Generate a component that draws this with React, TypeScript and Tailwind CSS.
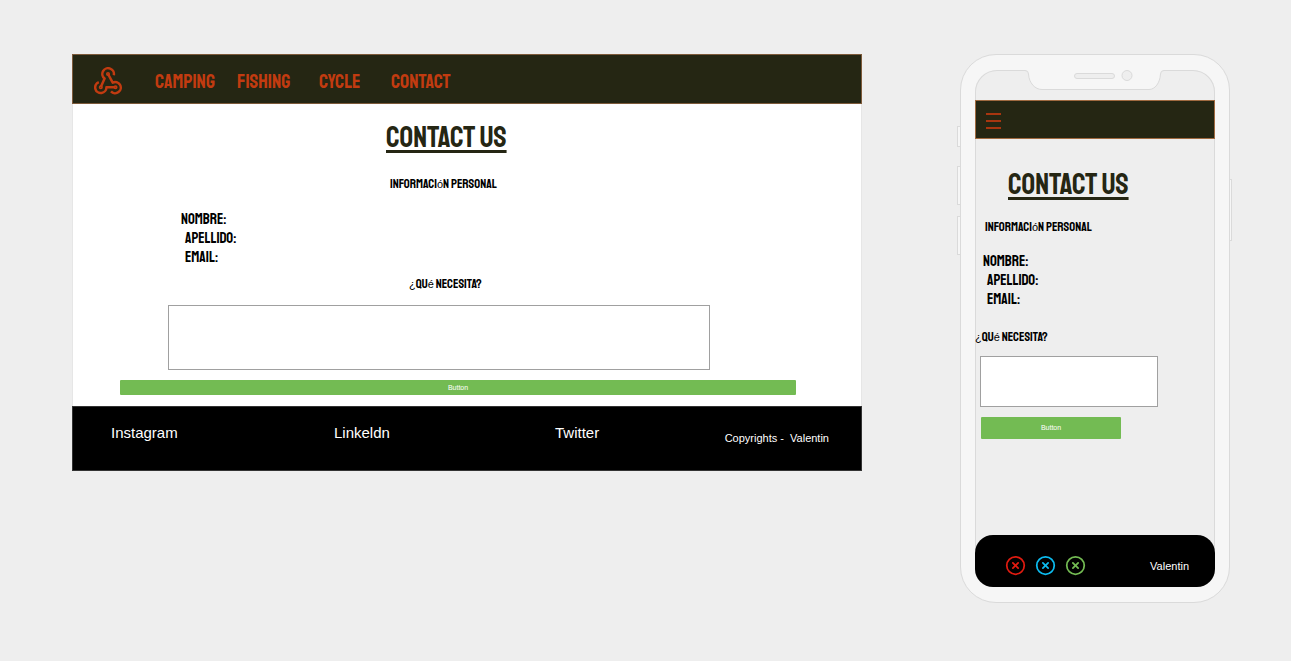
import type { ReactNode } from "react";
import { CircleX } from "lucide-react";

const display = "font-['Staatliches','Bebas_Neue','Liberation_Sans_Narrow','Liberation_Sans',sans-serif] font-normal";

const links = [
  { name: "CAMPING", width: "w-[82px]" },
  { name: "FISHING", width: "w-[82px]" },
  { name: "CYCLE", width: "w-[72px]" },
  { name: "CONTACT", width: "w-[72px]" },
];

const fields = [
  { id: "nombre", label: "NOMBRE:", indent: "" },
  { id: "apellido", label: "APELLIDO:", indent: "pl-1" },
  { id: "email", label: "EMAIL:", indent: "pl-1" },
];

function WebhookLogo() {
  return (
    <svg className="size-7" viewBox="0 0 28 28" fill="none" stroke="currentColor" strokeWidth="2.500" strokeLinecap="butt" strokeLinejoin="round">
      <path d="M19.800 8.200A5.800 5.800 0 1 0 10.600 11.600L6.800 20" />
      <path d="M14 7L18.700 15.600A5.600 5.600 0 1 1 17 24.400" />
      <path d="M4.800 15.200A5.600 5.600 0 1 0 12.400 20.300H21.500" />
      <circle cx="14" cy="7" r="0.800" />
      <circle cx="6.800" cy="20.200" r="0.800" />
      <circle cx="21.500" cy="20.300" r="0.800" />
    </svg>
  );
}

function Accent({ children }: { children: ReactNode }) {
  return <span className="font-['Liberation_Sans',sans-serif] text-[11px]">{children}</span>;
}

function PersonalInfo() {
  return <>INFORMACI<Accent>ó</Accent>N PERSONAL</>;
}

function NeedLabel() {
  return <><Accent>¿</Accent>QU<Accent>é</Accent> NECESITA?</>;
}

function Fields({ prefix }: { prefix: string }) {
  return (
    <div className={`${display} text-[15px] leading-[19px] text-black`}>
      {fields.map((f) => (
        <div key={f.id} className={`flex ${f.indent}`}>
          <label htmlFor={`${prefix}-${f.id}`}>{f.label}</label>
          <input id={`${prefix}-${f.id}`} className="ml-2 h-[19px] w-24 bg-transparent outline-none" />
        </div>
      ))}
    </div>
  );
}

function DesktopPage() {
  return (
    <section className="min-w-0 flex-1 bg-white">
      <nav className="flex h-[50px] items-center border border-[#7d5a3a] bg-[#252613] pt-1 pl-[21px] text-[#c23b10]">
        <a href="#home" aria-label="Home" className="mr-[33px]">
          <WebhookLogo />
        </a>
        {links.map((l) => (
          <a key={l.name} href={`#${l.name.toLowerCase()}`} className={`${display} ${l.width} pt-[2px] text-[20px] leading-5`}>
            {l.name}
          </a>
        ))}
      </nav>
      <form className="flex h-[302px] flex-col border-x border-[#e6e6e6]" onSubmit={(e) => e.preventDefault()}>
        <h1 className={`${display} mt-[17px] ml-[313px] self-start text-[30px] leading-8 text-[#252613] underline decoration-[3px] underline-offset-[3px]`}>
          CONTACT US
        </h1>
        <h2 className={`${display} mt-[23px] ml-[317px] text-[13px] leading-4 text-black`}>
          <PersonalInfo />
        </h2>
        <div className="mt-[18px] ml-[108px]">
          <Fields prefix="desktop" />
        </div>
        <label htmlFor="desktop-need" className={`${display} mt-[9px] ml-[336px] text-[13px] leading-4 text-black`}>
          <NeedLabel />
        </label>
        <textarea id="desktop-need" className="mt-[13px] mr-[151px] ml-[95px] h-[65px] resize-none border border-[#a0a0a0] bg-white" />
        <button type="submit" className="mt-[10px] mr-[65px] ml-[47px] h-[15px] shrink-0 rounded-[1px] bg-[#73bb53] font-['Liberation_Sans',sans-serif] text-[7px] leading-[15px] text-white">
          Button
        </button>
      </form>
      <footer className="flex h-[65px] items-start border border-[#333] bg-black pt-4 pl-[38px] font-['Liberation_Sans',sans-serif] text-[15px] leading-5 text-white">
        <a href="#instagram" className="w-[223px]">Instagram</a>
        <a href="#linkedin" className="w-[221px]">Linkeldn</a>
        <a href="#twitter">Twitter</a>
        <p className="mt-[5px] mr-8 ml-auto text-[11px] whitespace-pre">Copyrights -  Valentin</p>
      </footer>
    </section>
  );
}

function PhoneFrame({ children }: { children: ReactNode }) {
  const key = "absolute w-1 border border-[#dadada] bg-[#f6f6f6]";
  return (
    <section className="relative w-[275px] shrink-0 pr-[2px] pl-[3px]">
      <span className={`${key} top-[72px] left-0 h-[21px]`} />
      <span className={`${key} top-[112px] left-0 h-[39px]`} />
      <span className={`${key} top-[162px] left-0 h-[39px]`} />
      <span className={`${key} top-[125px] right-0 h-[62px]`} />
      <div className="relative rounded-[36px] border border-[#dadada] bg-[#f6f6f6] px-[14px] pt-[15px] pb-[15px]">
        <div className="flex h-[517px] flex-col rounded-[22px] bg-[#eee] pt-[30px] shadow-[inset_0_0_0_1px_#dadada]">{children}</div>
        <svg className="absolute top-[14px] left-[64px] h-[24px] w-[142px]" viewBox="0 0 142 24" fill="none" stroke="#dadada">
          <path d="M0 0H142V1.5H139Q135.500 1.500 135.500 5C135 14 130 20.500 124 20.500H17C10 20.500 4 14 3.500 5Q3.500 1.500 0 1.500Z" fill="#f6f6f6" stroke="none" />
          <path d="M0 1.500Q3.500 1.500 3.500 5C4 14 10 20.500 17 20.500H124C130 20.500 135 14 135.500 5Q135.500 1.500 139 1.500H142" />
          <rect x="49.500" y="4.500" width="40" height="5" rx="2.500" fill="#eee" />
          <circle cx="102" cy="6.500" r="5" fill="#eee" />
        </svg>
      </div>
    </section>
  );
}

function MobilePage() {
  return (
    <>
      <nav className="flex h-[39px] shrink-0 items-center border border-[#a06a40] bg-[#252613] pl-[10px]">
        <button type="button" aria-label="Menu" className="flex flex-col gap-[5px] pt-[2px]">
          <span className="h-[2px] w-[15px] bg-[#a8350f]" />
          <span className="h-[2px] w-[15px] bg-[#a8350f]" />
          <span className="h-[2px] w-[15px] bg-[#a8350f]" />
        </button>
      </nav>
      <form className="flex flex-1 flex-col items-start" onSubmit={(e) => e.preventDefault()}>
        <h1 className={`${display} mt-[29px] ml-[33px] text-[30px] leading-8 text-[#252613] underline decoration-[3px] underline-offset-[3px]`}>
          CONTACT US
        </h1>
        <h2 className={`${display} mt-[19px] ml-[10px] text-[13px] leading-4 text-black`}>
          <PersonalInfo />
        </h2>
        <div className="mt-[17px] ml-2">
          <Fields prefix="mobile" />
        </div>
        <label htmlFor="mobile-need" className={`${display} mt-5 text-[13px] leading-4 text-black`}>
          <NeedLabel />
        </label>
        <textarea id="mobile-need" className="mt-[11px] ml-[5px] h-[51px] w-[178px] resize-none border border-[#a0a0a0] bg-white" />
        <button type="submit" className="mt-[10px] ml-[6px] h-[22px] w-[140px] rounded-[1px] bg-[#73bb53] font-['Liberation_Sans',sans-serif] text-[7px] text-white">
          Button
        </button>
      </form>
      <footer className="flex h-[52px] shrink-0 items-center gap-[9px] rounded-[18px] bg-black pt-2 pr-[26px] pl-[30px] font-['Liberation_Sans',sans-serif] text-[11px] text-white">
        <a href="#instagram" aria-label="Instagram"><CircleX className="size-[21px] text-[#e01b10]" /></a>
        <a href="#linkedin" aria-label="LinkedIn"><CircleX className="size-[21px] text-[#0cbcf0]" /></a>
        <a href="#twitter" aria-label="Twitter"><CircleX className="size-[21px] text-[#73bb53]" /></a>
        <p className="mt-[2px] ml-auto">Valentin</p>
      </footer>
    </>
  );
}

export default function App() {
  return (
    <main className="flex min-h-screen items-start gap-[95px] bg-[#eee] pt-[54px] pr-[59px] pb-[58px] pl-[72px]">
      <DesktopPage />
      <PhoneFrame>
        <MobilePage />
      </PhoneFrame>
    </main>
  );
}
